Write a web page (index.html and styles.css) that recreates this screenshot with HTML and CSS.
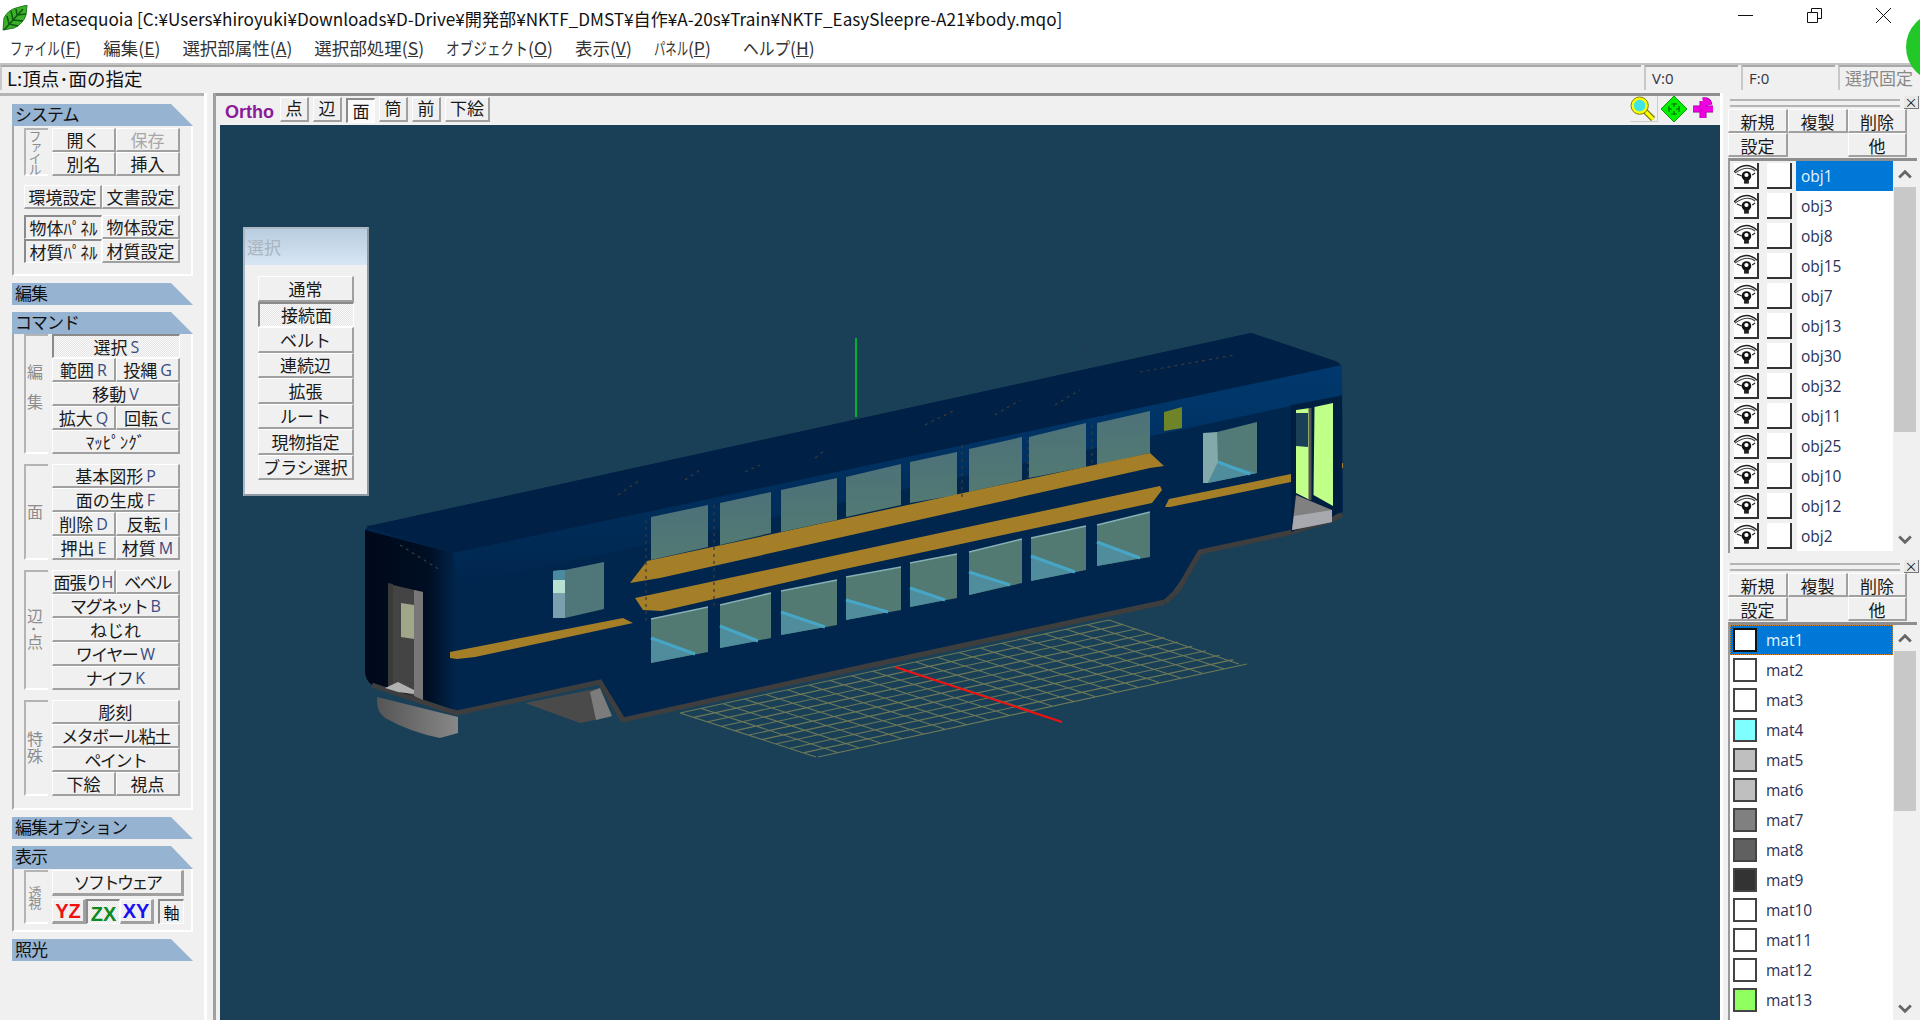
FILE: index.html
```html
<!DOCTYPE html>
<html lang="ja">
<head>
    <meta charset="UTF-8">
    <title>Metasequoia</title>
    <link rel="stylesheet" href="styles.css">
</head>
<body>
    <svg class="defs" width="0" height="0">
        <symbol id="eye" viewBox="0 0 24 24">
            <path d="M0 9 Q6 2 13 2 Q19 2 24 7" fill="none" stroke="#222" stroke-width="1.5"/>
            <path d="M1 10 Q8 5 14 5 Q19 5 22 8" fill="none" stroke="#444" stroke-width="1.2"/>
            <path d="M3 11 L8 13 M19 12 L22 10" stroke="#222" stroke-width="1.2"/>
            <circle cx="13" cy="13" r="5" fill="#111"/>
            <circle cx="13" cy="12" r="2.2" fill="#fff"/>
            <rect x="10.5" y="17" width="5" height="4" fill="#222"/>
        </symbol>
    </svg>

    <div class="titlebar">
        <svg class="logo" viewBox="0 0 26 26">
            <path d="M1 25 L2 13 Q6 5 14 3 L25 0 L24 10 Q21 19 12 23 Z" fill="#3cb028" stroke="#1d7a18"/>
            <path d="M2 25 L21 4 M7 19 L5 11 M11 15 L9 6 M15 10 L14 4 M7 19 L16 21 M11 15 L21 16 M15 10 L24 9" stroke="#0c5a10" stroke-width="1.5" fill="none"/>
        </svg>
        <span class="title-text">Metasequoia [C:¥Users¥hiroyuki¥Downloads¥D-Drive¥開発部¥NKTF_DMST¥自作¥A-20s¥Train¥NKTF_EasySleepre-A21¥body.mqo]</span>
        <div class="win-btns">
            <svg width="15" height="15" viewBox="0 0 15 15"><path d="M0 7.5H15" stroke="#111"/></svg>
            <svg width="15" height="15" viewBox="0 0 15 15"><path d="M.5 4.5h10v10H.5z M4.5 4V.5h10v10H11" fill="none" stroke="#111"/></svg>
            <svg width="15" height="15" viewBox="0 0 15 15"><path d="M0 0L15 15M15 0L0 15" stroke="#111"/></svg>
        </div>
    </div>

    <div class="menubar">
        <span><i class="narrow n4">ファイル</i>(<u>F</u>)</span>
        <span>編集(<u>E</u>)</span>
        <span>選択部属性(<u>A</u>)</span>
        <span>選択部処理(<u>S</u>)</span>
        <span><i class="narrow n6">オブジェクト</i>(<u>O</u>)</span>
        <span>表示(<u>V</u>)</span>
        <span><i class="narrow n3">パネル</i>(<u>P</u>)</span>
        <span class="help"><i class="narrow nh">ヘルプ</i>(<u>H</u>)</span>
    </div>

    <div class="statusbar">
        <div class="cell cell-main">L:頂点･面の指定</div>
        <div class="cell cell-num">V:0</div>
        <div class="cell cell-num">F:0</div>
        <div class="cell cell-lock">選択固定</div>
    </div>
    <div class="green-dot"></div>

    <div class="main">
        <div class="side">
            <div class="sec-head">システム</div>
            <div class="sec-box">
                <div class="group">
                    <div class="vlabel small">ファイル</div>
                    <div class="btns">
                        <div class="btn">開く</div><div class="btn off">保存</div>
                        <div class="btn">別名</div><div class="btn">挿入</div>
                    </div>
                </div>
                <div class="btns wide">
                    <div class="btn">環境設定</div><div class="btn">文書設定</div>
                </div>
                <div class="btns wide">
                    <div class="btn on">物体ﾊﾟﾈﾙ</div><div class="btn">物体設定</div>
                    <div class="btn on">材質ﾊﾟﾈﾙ</div><div class="btn">材質設定</div>
                </div>
            </div>
            <div class="sec-head">編集</div>
            <div class="sec-head head-cmd">コマンド</div>
            <div class="sec-box box-cmd">
                <div class="group">
                    <div class="vlabel spaced">編集</div>
                    <div class="btns">
                        <div class="btn full on dither">選択 <b>S</b></div>
                        <div class="btn">範囲 <b>R</b></div><div class="btn">投縄 <b>G</b></div>
                        <div class="btn full">移動 <b>V</b></div>
                        <div class="btn">拡大 <b>Q</b></div><div class="btn">回転 <b>C</b></div>
                        <div class="btn full">ﾏｯﾋﾟﾝｸﾞ</div>
                    </div>
                </div>
                <div class="group">
                    <div class="vlabel">面</div>
                    <div class="btns">
                        <div class="btn full">基本図形 <b>P</b></div>
                        <div class="btn full">面の生成 <b>F</b></div>
                        <div class="btn">削除 <b>D</b></div><div class="btn">反転 <b>I</b></div>
                        <div class="btn">押出 <b>E</b></div><div class="btn">材質 <b>M</b></div>
                    </div>
                </div>
                <div class="group">
                    <div class="vlabel">辺･点</div>
                    <div class="btns">
                        <div class="btn tight">面張り <b>H</b></div><div class="btn kana">ベベル</div>
                        <div class="btn full kana">マグネット <b>B</b></div>
                        <div class="btn full">ねじれ</div>
                        <div class="btn full kana">ワイヤー <b>W</b></div>
                        <div class="btn full kana">ナイフ <b>K</b></div>
                    </div>
                </div>
                <div class="group">
                    <div class="vlabel">特殊</div>
                    <div class="btns">
                        <div class="btn full">彫刻</div>
                        <div class="btn full kana">メタボール粘土</div>
                        <div class="btn full kana">ペイント</div>
                        <div class="btn">下絵</div><div class="btn">視点</div>
                    </div>
                </div>
            </div>
            <div class="sec-head">編集オプション</div>
            <div class="sec-head head-view">表示</div>
            <div class="sec-box box-view">
                <div class="group">
                    <div class="vlabel small">透視</div>
                    <div class="view-btns">
                        <div class="btn soft">ソフトウェア</div>
                        <div class="axis-row">
                            <div class="btn axis yz">YZ</div>
                            <div class="btn axis on dither zx">ZX</div>
                            <div class="btn axis xy">XY</div>
                            <div class="btn axis on jiku">軸</div>
                        </div>
                    </div>
                </div>
            </div>
            <div class="sec-head">照光</div>
        </div>

        <div class="split"></div>

        <div class="view">
            <div class="view-tools">
                <span class="ortho">Ortho</span>
                <div class="btn tool">点</div>
                <div class="btn tool">辺</div>
                <div class="btn tool on">面</div>
                <div class="btn tool">筒</div>
                <div class="btn tool">前</div>
                <div class="btn tool tool-wide">下絵</div>
                <div class="tool-icons">
                    <svg class="raised" width="28" height="26" viewBox="0 0 28 26">
                        <path d="M14 14L24 24" stroke="#7a7a00" stroke-width="6"/>
                        <path d="M14 14L24 24" stroke="#ffff00" stroke-width="3.5"/>
                        <circle cx="10" cy="10" r="7.5" fill="#3fe4e4" stroke="#ffff00" stroke-width="3"/>
                        <circle cx="10" cy="10" r="9" fill="none" stroke="#7a7a00"/>
                    </svg>
                    <svg width="26" height="26" viewBox="0 0 26 26">
                        <path d="M13 0L26 13L13 26L0 13Z" fill="#00f000" stroke="#0a9a0a"/>
                        <path d="M13 7V11M13 15V19M7 13H11M15 13H19M10 8H16M10 18H16M8 10V16M18 10V16" stroke="#056b05" stroke-width="1.2"/>
                    </svg>
                    <svg width="26" height="26" viewBox="0 0 26 26">
                        <path d="M13 5V22M3 13H23M13 5Q18 4 19 9" fill="none" stroke="#900090" stroke-width="7"/>
                        <path d="M13 5V22M3 13H23M13 5Q18 4 19 9" fill="none" stroke="#f000e0" stroke-width="5.5"/>
                        <path d="M10 14H12" stroke="#900090"/>
                    </svg>
                </div>
            </div>
            <div class="canvas">
                <svg class="scene" viewBox="220 125 1500 895">
                    <defs>
                        <linearGradient id="band" x1="0" y1="0" x2="0.05" y2="1">
                            <stop offset="0" stop-color="#003a70"/>
                            <stop offset="1" stop-color="#00264e"/>
                        </linearGradient>
                        <linearGradient id="front" x1="0" y1="0" x2="1" y2="0">
                            <stop offset="0" stop-color="#00081a"/>
                            <stop offset="0.7" stop-color="#000f24"/>
                            <stop offset="1" stop-color="#00264e"/>
                        </linearGradient>
                        <linearGradient id="bogie" x1="0" y1="0" x2="1" y2="0">
                            <stop offset="0" stop-color="#555"/>
                            <stop offset="1" stop-color="#888"/>
                        </linearGradient>
                        <linearGradient id="glass" x1="0" y1="0" x2="0" y2="1">
                            <stop offset="0" stop-color="#4d7179"/>
                            <stop offset="1" stop-color="#527a72"/>
                        </linearGradient>
                    </defs>

                    <!-- floor grid -->
                    <path class="grid" d="M680 713l429-93M693.8 717.4l429-93M707.6 721.8l429-93M721.4 726.2l429-93M735.2 730.6l429-93M749 735l429-93M762.8 739.4l429-93M776.6 743.8l429-93M790.4 748.2l429-93M804.2 752.6l429-93M818 757l429-93
                    M680 713l136 44M701.5 708.4l136 44M722.9 703.7l136 44M744.4 699.1l136 44M765.8 694.4l136 44M787.3 689.8l136 44M808.7 685.1l136 44M830.2 680.5l136 44M851.6 675.8l136 44M873 671.2l136 44M894.5 666.5l136 44M916 661.9l136 44M937.4 657.2l136 44M958.9 652.6l136 44M980.3 647.9l136 44M1001.8 643.3l136 44M1023.2 638.6l136 44M1044.7 634l136 44M1066.1 629.3l136 44M1087.6 624.7l136 44M1109 620l130 44"/>
                    <path d="M895 667L1062 722" stroke="#f01010" stroke-width="2" fill="none"/>
                    <path d="M856 338V417" stroke="#00b030" stroke-width="2" fill="none"/>

                    <!-- under parts -->
                    <path d="M377 697L458 717V733L440 738Q410 732 385 718Q376 712 377 697Z" fill="url(#bogie)"/>
                    <path d="M525 703L600 688L610 717L580 723Z" fill="#4a4a4a"/>
                    <path d="M590 692L600 688L612 716L596 720Z" fill="#7c7c7c"/>
                    <path d="M1160 590L1186 548L1184 575L1168 602Z" fill="#777"/>

                    <!-- body -->
                    <path d="M365 530Q367 526 374 525L1251 333L1335 361Q1342 364 1342 372L1343 510Q1342 518 1332 522L1288 535L1200 552L1165 604L840 673L623 720L600 682L457 713L450 711L372 685Q365 680 365 670Z" fill="#00264e"/>
                    <path d="M1251 333L1335 361Q1341 363 1341 368L453 553L366 527Q366 526 374 525Z" fill="#002045"/>
                    <path d="M453 553L1342 365L1342 395L458 585Z" fill="url(#band)"/>
                    <path d="M365 530L453 553L457 590L455 713L450 711L372 685Q365 680 365 670Z" fill="url(#front)"/>
                    <path class="edge" d="M372 685L450 711L457 713L600 682L623 720L840 672L1165 602"/>
                    <path class="edge" d="M1165 602L1178 590L1200 552L1288 533L1332 520L1342 514"/>

                    <!-- left door -->
                    <path d="M388 583L393 584L393 690L388 686Z" fill="#3a3a3a"/>
                    <path d="M393 585L423 592V700L393 688Z" fill="#444"/>
                    <path d="M414 590L423 592V700L414 696Z" fill="#777"/>
                    <path d="M401 603L414 605V639L401 637Z" fill="#a0a68a"/>
                    <path d="M385 688L398 682L414 690V694L398 692Z" fill="#b0b0b0"/>

                    <!-- end window -->
                    <path d="M553 571L565 570V618L553 618Z" fill="#7aa0ae"/>
                    <path d="M553 571L565 570V580L553 580Z" fill="#4a8aa0"/>
                    <path d="M553 580H565V593H553Z" fill="#b8e0d0"/>
                    <path d="M565 570L604 562V609L565 618Z" fill="#4f7678"/>

                    <!-- upper windows -->
                    <g fill="url(#glass)">
                        <path d="M651 517L708 505V547L651 560Z"/>
                        <path d="M720 503L771 492V533L720 545Z"/>
                        <path d="M781 490L837 478V520L781 532Z"/>
                        <path d="M846 477L901 464V505L846 517Z"/>
                        <path d="M910 462L957 452V495L910 503Z"/>
                        <path d="M969 449L1022 437V480L969 492Z"/>
                        <path d="M1029 437L1086 423V467L1029 478Z"/>
                        <path d="M1097 423L1150 411V453L1097 465Z"/>
                    </g>

                    <!-- lower windows -->
                    <g fill="#527a72">
                        <path d="M651 619L708 607V652L651 663Z"/>
                        <path d="M720 605L771 593V638L720 648Z"/>
                        <path d="M781 591L837 580V625L781 635Z"/>
                        <path d="M846 577L901 567V610L846 620Z"/>
                        <path d="M910 563L957 554V598L910 607Z"/>
                        <path d="M969 552L1022 539V583L969 595Z"/>
                        <path d="M1031 538L1086 526V570L1031 581Z"/>
                        <path d="M1097 525L1150 512V557L1097 566Z"/>
                    </g>
                    <g fill="#4f8c9c">
                        <path d="M651 638L695 654L651 663Z"/>
                        <path d="M720 626L758 641L720 648Z"/>
                        <path d="M781 612L825 627L781 635Z"/>
                        <path d="M846 600L888 612L846 620Z"/>
                        <path d="M910 588L945 600L910 607Z"/>
                        <path d="M969 572L1010 585L969 595Z"/>
                        <path d="M1031 556L1075 572L1031 581Z"/>
                        <path d="M1097 542L1140 558L1097 566Z"/>
                    </g>
                    <path class="seat" d="M651 638L695 654M720 626L758 641M781 612L825 627M846 600L888 612M910 588L945 600M969 572L1010 585M1031 556L1075 572M1097 542L1140 558"/>
                    <path class="seat-top" d="M651 619L708 607M720 605L771 593M781 591L837 580M846 577L901 567M910 563L957 554M969 552L1022 539M1031 538L1086 526M1097 525L1150 512"/>

                    <!-- stripes -->
                    <g fill="#a57f28">
                        <path d="M630 583L647 561L1150 453L1164 466L1150 468L660 578Z"/>
                        <path d="M635 598L837 555L1160 486L1162 490L1152 503L840 570L662 611L643 610Z"/>
                        <path d="M450 652L623 618L633 623L475 657L457 659L450 658Z"/>
                        <path d="M1165 507L1169 499L1296 473V481L1170 507Z"/>
                        <path d="M1333 465L1343 463V468L1333 472Z"/>
                    </g>
                    <path d="M1164 412L1182 407V428L1164 431Z" fill="#6f8428"/>

                    <!-- rear window -->
                    <path d="M1217 432L1257 422V473L1208 483L1217 462Z" fill="#527a76"/>
                    <path d="M1208 483L1218 462L1257 473Z" fill="#4f8c9c"/>
                    <path d="M1218 462L1250 474" stroke="#47a5c5" stroke-width="3"/>
                    <path d="M1203 433L1217 432L1218 462L1208 483H1203Z" fill="#83a9aa"/>

                    <!-- rear door -->
                    <path d="M1291 405L1342 396V512L1291 532Z" fill="#001f40"/>
                    <path d="M1314.5 407L1333 403V506L1313.5 495Z" fill="#c0ff88"/>
                    <path d="M1296 410L1310 408V500L1296 493Z" fill="#c0ff88"/>
                    <path d="M1296 413L1308 413V447L1296 446Z" fill="#1a4058"/>
                    <path d="M1296 495L1332 510V522L1292 530Z" fill="#808080"/>
                    <path d="M1294 516L1332 510V522L1292 530Z" fill="#a8a8b0"/>
                    <path d="M1310 408V500" stroke="#555" stroke-width="3"/>

                    <!-- seams -->
                    <g class="dots">
                        <path d="M646 520V625M714 505V610M1083 345L1090 350"/>
                        <path d="M1140 372L1235 355"/>
                        <path d="M618 495L640 480M685 480L700 470M745 472L760 465M815 458L825 450"/>
                        <path d="M925 425L955 410M995 415L1020 400M1055 405L1080 390"/>
                        <path d="M400 545L440 570"/>
                        <path d="M962 445V500M1028 440V482M1092 425V465"/>
                    </g>
                </svg>

                <div class="float-panel">
                    <div class="float-title">選択</div>
                    <div class="float-btns">
                        <div class="btn">通常</div>
                        <div class="btn on dither">接続面</div>
                        <div class="btn">ベルト</div>
                        <div class="btn">連続辺</div>
                        <div class="btn">拡張</div>
                        <div class="btn">ルート</div>
                        <div class="btn">現物指定</div>
                        <div class="btn">ブラシ選択</div>
                    </div>
                </div>
            </div>
        </div>

        <div class="right">
            <div class="panel panel-obj">
                <div class="grip"><div class="grip-lines"></div><div class="x-btn">×</div></div>
                <div class="panel-btns">
                    <div class="btn">新規</div><div class="btn">複製</div><div class="btn">削除</div>
                    <div class="btn">設定</div><div class="blank"></div><div class="btn">他</div>
                </div>
                <div class="list">
                    <div class="rows">
                        <div class="row"><div class="mini"><svg><use href="#eye"/></svg></div><div class="mini"></div><div class="name sel">obj1</div></div>
                        <div class="row"><div class="mini"><svg><use href="#eye"/></svg></div><div class="mini"></div><div class="name">obj3</div></div>
                        <div class="row"><div class="mini"><svg><use href="#eye"/></svg></div><div class="mini"></div><div class="name">obj8</div></div>
                        <div class="row"><div class="mini"><svg><use href="#eye"/></svg></div><div class="mini"></div><div class="name">obj15</div></div>
                        <div class="row"><div class="mini"><svg><use href="#eye"/></svg></div><div class="mini"></div><div class="name">obj7</div></div>
                        <div class="row"><div class="mini"><svg><use href="#eye"/></svg></div><div class="mini"></div><div class="name">obj13</div></div>
                        <div class="row"><div class="mini"><svg><use href="#eye"/></svg></div><div class="mini"></div><div class="name">obj30</div></div>
                        <div class="row"><div class="mini"><svg><use href="#eye"/></svg></div><div class="mini"></div><div class="name">obj32</div></div>
                        <div class="row"><div class="mini"><svg><use href="#eye"/></svg></div><div class="mini"></div><div class="name">obj11</div></div>
                        <div class="row"><div class="mini"><svg><use href="#eye"/></svg></div><div class="mini"></div><div class="name">obj25</div></div>
                        <div class="row"><div class="mini"><svg><use href="#eye"/></svg></div><div class="mini"></div><div class="name">obj10</div></div>
                        <div class="row"><div class="mini"><svg><use href="#eye"/></svg></div><div class="mini"></div><div class="name">obj12</div></div>
                        <div class="row"><div class="mini"><svg><use href="#eye"/></svg></div><div class="mini"></div><div class="name">obj2</div></div>
                    </div>
                    <div class="scroll">
                        <svg class="arrow" viewBox="0 0 12 8"><path d="M1 7L6 2L11 7" fill="none" stroke="#666" stroke-width="2.4"/></svg>
                        <div class="track"><div class="thumb thumb-obj"></div></div>
                        <svg class="arrow" viewBox="0 0 12 8"><path d="M1 1L6 6L11 1" fill="none" stroke="#666" stroke-width="2.4"/></svg>
                    </div>
                </div>
            </div>

            <div class="panel panel-mat">
                <div class="grip"><div class="grip-lines"></div><div class="x-btn">×</div></div>
                <div class="panel-btns">
                    <div class="btn">新規</div><div class="btn">複製</div><div class="btn">削除</div>
                    <div class="btn">設定</div><div class="blank"></div><div class="btn">他</div>
                </div>
                <div class="list">
                    <div class="rows rows-mat">
                        <div class="row mat mat-sel"><span class="swatch"></span>mat1</div>
                        <div class="row mat"><span class="swatch"></span>mat2</div>
                        <div class="row mat"><span class="swatch"></span>mat3</div>
                        <div class="row mat"><span class="swatch" style="background:#7fffff"></span>mat4</div>
                        <div class="row mat"><span class="swatch" style="background:#bfbfbf"></span>mat5</div>
                        <div class="row mat"><span class="swatch" style="background:#bfbfbf"></span>mat6</div>
                        <div class="row mat"><span class="swatch" style="background:#808080"></span>mat7</div>
                        <div class="row mat"><span class="swatch" style="background:#606060"></span>mat8</div>
                        <div class="row mat"><span class="swatch" style="background:#333"></span>mat9</div>
                        <div class="row mat"><span class="swatch"></span>mat10</div>
                        <div class="row mat"><span class="swatch"></span>mat11</div>
                        <div class="row mat"><span class="swatch"></span>mat12</div>
                        <div class="row mat"><span class="swatch" style="background:#90ff60"></span>mat13</div>
                    </div>
                    <div class="scroll">
                        <svg class="arrow" viewBox="0 0 12 8"><path d="M1 7L6 2L11 7" fill="none" stroke="#666" stroke-width="2.4"/></svg>
                        <div class="track"><div class="thumb thumb-mat"></div></div>
                        <svg class="arrow" viewBox="0 0 12 8"><path d="M1 1L6 6L11 1" fill="none" stroke="#666" stroke-width="2.4"/></svg>
                    </div>
                </div>
            </div>
        </div>
    </div>
</body>
</html>
```
FILE: styles.css
```css
* {
    box-sizing: border-box;
}

html, body {
    margin: 0;
    padding: 0;
    height: 100%;
    overflow: hidden;
}

body {
    width: 1920px;
    height: 1020px;
    position: relative;
    background-color: #f0f0f0;
    font-family: "Noto Sans CJK JP", "Noto Sans", sans-serif;
    font-size: 17px;
    color: #111;
    display: flex;
    flex-direction: column;
}

.defs {
    position: absolute;
}

/* top bars */
.titlebar {
    height: 32px;
    background-color: #fff;
    display: flex;
    align-items: center;
    padding-left: 2px;
}

.logo {
    width: 26px;
    height: 26px;
    margin-top: 4px;
}

.title-text {
    margin-left: 3px;
    margin-top: 4px;
    font-size: 17.15px;
    white-space: nowrap;
}

.win-btns {
    margin-left: auto;
    margin-right: 29px;
    display: flex;
    gap: 54px;
    margin-bottom: 2px;
}

.menubar {
    height: 33px;
    background-color: #fff;
    border-bottom: 2px solid #c4c4c4;
    display: flex;
    align-items: center;
    padding-left: 10px;
    gap: 22px;
    font-size: 17.5px;
    color: #333;
}

/* the original font draws katakana much narrower than kanji */
.narrow {
    display: inline-block;
    font-style: normal;
    transform-origin: left;
}

.n3 { transform: scaleX(.65); margin-right: -1.05em; }
.n4 { transform: scaleX(.71); margin-right: -1.16em; }
.n6 { transform: scaleX(.78); margin-right: -1.32em; }
.nh { transform: scaleX(.9); margin-right: -.3em; }

.help {
    margin-left: 10px;
}

.statusbar {
    height: 28px;
    display: flex;
    gap: 3px;
    padding-bottom: 3px;
}

.cell {
    border-top: 2px solid #a8a8a8;
    border-left: 2px solid #c8c8c8;
    padding-left: 5px;
    line-height: 22px;
    overflow: hidden;
    white-space: nowrap;
}

.cell-main {
    width: 1641px;
    font-size: 18.5px;
}

.cell-num {
    width: 94px;
    font-family: "Open Sans", sans-serif;
    font-size: 15px;
    color: #334;
    padding-left: 6px;
}

.cell-lock {
    flex: 1;
    color: #888;
}

.green-dot {
    position: absolute;
    left: 1906px;
    top: 12px;
    width: 70px;
    height: 70px;
    border-radius: 50%;
    background-color: #22c728;
}

.main {
    flex: 1;
    min-height: 0;
    display: flex;
}

/* left tool column */
.side {
    width: 204px;
    padding: 8px 11px 0 12px;
    background-color: #f0f0f0;
    border-top: 3px solid #b4b4b4;
}

.sec-head {
    height: 22px;
    margin-bottom: 7px;
    padding-left: 3px;
    line-height: 20px;
    background-color: #97b3d2;
    clip-path: polygon(0 0, 159px 0, 100% 100%, 0 100%);
    letter-spacing: -1px;
}

.head-cmd, .head-view {
    margin-bottom: 0;
}

.head-view {
    height: 23px;
}

.sec-box {
    border-left: 2px solid #a8a8a8;
    border-bottom: 2px solid #fff;
    border-right: 2px solid #fff;
    margin-bottom: 7px;
    margin-top: -7px;
    height: 150px;
    padding: 2px 0 0 10px;
    display: flex;
    flex-direction: column;
    gap: 9px;
}

.sec-box .btns.wide + .btns.wide {
    margin-top: -3px;
}

.box-cmd {
    margin-top: 0;
    height: 476px;
    padding-top: 0;
    gap: 10px;
}

.box-view {
    margin-top: 0;
    height: 63px;
    padding-top: 1px;
}

.group {
    display: flex;
    gap: 4px;
}

.vlabel {
    width: 24px;
    border-top: 2px solid #b4b4b4;
    border-left: 2px solid #b4b4b4;
    border-bottom: 2px solid #fff;
    padding-right: 4px;
    color: #8c8c8c;
    writing-mode: vertical-rl;
    display: flex;
    align-items: center;
    justify-content: center;
    font-size: 16px;
    letter-spacing: 1px;
}

.vlabel.small {
    font-size: 13px;
    letter-spacing: -2px;
}

.vlabel.spaced {
    letter-spacing: 14px;
}

.btns {
    width: 128px;
    display: grid;
    grid-template-columns: 64px 64px;
    grid-auto-rows: 24px;
}

.btns.wide {
    width: 156px;
    grid-template-columns: 78px 78px;
}

.btn {
    background-color: #f0f0f0;
    border-top: 1px solid #fff;
    border-left: 1px solid #fff;
    border-right: 2px solid #a0a0a0;
    border-bottom: 2px solid #a0a0a0;
    display: flex;
    align-items: center;
    justify-content: center;
    white-space: nowrap;
    line-height: 1;
    font-size: 17px;
    color: #1a1a1a;
}

.btn.kana {
    letter-spacing: -1.5px;
}

.btn.tight {
    letter-spacing: -1px;
}

.btn b {
    font-family: "Open Sans", sans-serif;
    font-weight: 400;
    font-size: 16px;
    letter-spacing: 0;
    color: #3a4a80;
    margin-left: 3px;
}

.btn.tight b {
    margin-left: 0;
}

.btn.full {
    grid-column: span 2;
}

.btn.off {
    color: #a8a8a8;
}

.btn.on {
    border-top: 2px solid #8a8a8a;
    border-left: 2px solid #8a8a8a;
    border-right: 1px solid #fff;
    border-bottom: 1px solid #fff;
}

.btn.dither {
    background-color: #f8f8f8;
    background-image: repeating-conic-gradient(#e4e4e4 0% 25%, #fafafa 0% 50%);
    background-size: 2px 2px;
}

.view-btns {
    width: 132px;
    display: flex;
    flex-direction: column;
    gap: 3px;
}

.soft {
    height: 26px;
    padding-bottom: 2px;
    letter-spacing: -2.5px;
    border-right-width: 3px;
    border-bottom-width: 3px;
}

.axis-row {
    display: flex;
    width: 132px;
}

.axis {
    width: 34px;
    height: 25px;
    font-family: "Liberation Sans", sans-serif;
    font-weight: 700;
    font-size: 20px;
    border-right-width: 3px;
    border-bottom-width: 3px;
}

.yz { color: #f01010; }
.zx { color: #0a8a20; padding-top: 3px; }
.xy { color: #1a10f0; }

.jiku {
    width: 26px;
    margin-left: 4px;
    font-family: "Noto Sans CJK JP", sans-serif;
    font-weight: 400;
    font-size: 16px;
    color: #111;
}

.split {
    width: 12px;
    background-color: #f0f0f0;
    border-left: 3px solid #fff;
    border-right: 3px solid #a0a0a0;
}

/* 3d view */
.view {
    width: 1505px;
    display: flex;
    flex-direction: column;
    border-left: 1px solid #a0a0a0;
    margin-left: -1px;
}

.view-tools {
    height: 32px;
    border-top: 3px solid #909090;
    display: flex;
    align-items: center;
    padding: 0 0 3px 9px;
    gap: 4px;
    background-color: #f0f0f0;
}

.ortho {
    width: 51px;
    font-family: "Liberation Sans", sans-serif;
    font-weight: 700;
    font-size: 18px;
    color: #8a1a9a;
    margin-top: 6px;
}

.tool {
    width: 29px;
    height: 25px;
    padding-bottom: 2px;
}

.tool-wide {
    width: 45px;
}

.tool.on {
    background-color: #fafafa;
    margin-top: 3px;
}

.tool-icons {
    margin-left: auto;
    display: flex;
    align-items: center;
    gap: 3px;
    padding-right: 4px;
}

.raised {
    border-right: 1px solid #ccc;
    border-bottom: 1px solid #ccc;
}

.canvas {
    flex: 1;
    position: relative;
    margin-left: 4px;
    background-color: #1a4058;
    overflow: hidden;
}

.scene {
    position: absolute;
    left: 0;
    top: 0;
    width: 1500px;
    height: 895px;
}

.grid {
    fill: none;
    stroke: #6c7858;
    stroke-width: 1.1;
}

.edge {
    fill: none;
    stroke: #3e3e3e;
    stroke-width: 5;
}

.seat {
    fill: none;
    stroke: #47a5c5;
    stroke-width: 3;
}

.seat-top {
    fill: none;
    stroke: #86b0b4;
    stroke-width: 1.5;
}

.dots path {
    fill: none;
    stroke: #3a3a3a;
    stroke-width: 1.2;
    stroke-dasharray: 3 4;
}

.float-panel {
    position: absolute;
    left: 23px;
    top: 102px;
    width: 126px;
    height: 269px;
    background-color: #f0f0f0;
    border: 2px solid #8e9aa4;
    border-left-color: #aeb8c2;
    border-top-color: #aeb8c2;
}

.float-title {
    height: 36px;
    padding: 8px 0 0 2px;
    background: linear-gradient(#b8cde0, #d7e6f4);
    color: #aab4bc;
    font-size: 17px;
    line-height: 20px;
}

.float-btns {
    padding: 11px 13px 0 13px;
    display: flex;
    flex-direction: column;
}

.float-btns .btn {
    height: 25.5px;
}

/* right panels */
.right {
    flex: 1;
    display: flex;
    flex-direction: column;
    padding-left: 5px;
    border-left: 3px solid #fff;
}

.panel-obj {
    height: 464px;
}

.panel-mat {
    flex: 1;
    min-height: 0;
}

.grip {
    height: 16px;
    display: flex;
    align-items: center;
    gap: 4px;
    padding-top: 3px;
}

.grip-lines {
    width: 170px;
    height: 8px;
    margin-left: 2px;
    border-top: 2px solid #b4b4b4;
    border-bottom: 2px solid #b4b4b4;
}

.x-btn {
    width: 15px;
    height: 13px;
    border-right: 1px solid #777;
    border-bottom: 1px solid #777;
    font-size: 13px;
    line-height: 11px;
    text-align: center;
    background-color: #e8e8e8;
}

.panel-btns {
    display: grid;
    grid-template-columns: 60px 60px 59px;
    grid-auto-rows: 24px;
    width: 180px;
}

.panel-btns .btn {
    padding-top: 2px;
}

.blank {
    background-color: #efefef;
}

.list {
    margin-top: 1px;
    width: 189px;
    height: 395px;
    display: flex;
    border-top: 3px solid #8e8e8e;
    border-left: 2px solid #9a9a9a;
    background-color: #f0f0f0;
}

.panel-mat .list {
    height: 400px;
}

.rows {
    width: 163px;
}

.row {
    height: 30px;
    display: flex;
    align-items: center;
    font-family: "Open Sans", sans-serif;
    font-size: 15.5px;
    color: #2a3258;
    background: linear-gradient(90deg, #f0f0f0 67px, #fff 67px);
    padding-left: 4px;
    gap: 8px;
}

.mini {
    width: 25px;
    height: 26px;
    background-color: #fff;
    border-right: 2px solid #333;
    border-bottom: 2px solid #333;
}

.mini svg {
    width: 23px;
    height: 24px;
    display: block;
}

.name {
    flex: 1;
    height: 30px;
    line-height: 30px;
    padding-left: 5px;
    margin-left: -4px;
}

.name.sel {
    background-color: #0078d7;
    color: #e8f4ff;
}

.rows-mat {
    background-color: #fff;
}

.row.mat {
    background: #fff;
    gap: 9px;
    padding-left: 3px;
}

.row.mat-sel {
    background-color: #0078d7;
    color: #e8f4ff;
    outline: 1px dotted #d08020;
    outline-offset: -1px;
}

.swatch {
    width: 24px;
    height: 24px;
    background-color: #fff;
    border: 2px solid #444;
}

.mat-sel .swatch {
    border-color: #111;
}

.scroll {
    flex: 1;
    display: flex;
    flex-direction: column;
    align-items: center;
    background-color: #f0f0f0;
    padding: 0 1px;
}

.arrow {
    width: 14px;
    height: 26px;
    flex: none;
}

.track {
    flex: 1;
    width: 100%;
}

.thumb {
    background-color: #c8c8c8;
}

.thumb-obj {
    height: 245px;
}

.thumb-mat {
    height: 160px;
}
```
